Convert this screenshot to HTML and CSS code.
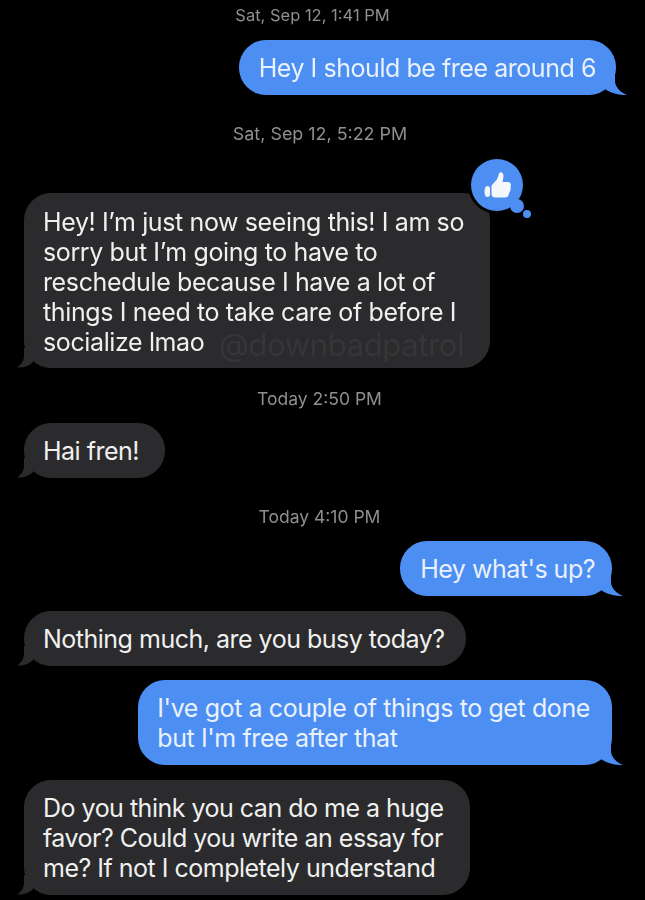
FILE: index.html
```html
<!DOCTYPE html>
<html lang="en">
<head>
<meta charset="utf-8">
<title>Messages</title>
<link rel="stylesheet" href="styles.css">
</head>
<body>
<main class="thread">
  <div class="time time-a">Sat, Sep 12, 1:41 PM</div>
  <div class="row out gap-s edge-far"><div class="bubble blue mid">Hey I should be free around 6<svg class="tail tail-out" viewBox="0 0 24 20"><path d="M0 0H12V6C12 12 18 18 24 20C15 20 8 18 2 14Z"/></svg></div></div>
  <div class="time time-b gap-m">Sat, Sep 12, 5:22 PM</div>
  <div class="row in gap-l"><div class="bubble gray wide">Hey! I’m just now seeing this! I am so<br>sorry but I’m going to have to<br>reschedule because I have a lot of<br>things I need to take care of before I<br>socialize lmao <span class="mark">@downbadpatrol</span><svg class="tail tail-in" viewBox="0 0 20 20"><path d="M20 0H7V8C7 13 4 17 0 19.500C6 20 12 18 16 14Z"/></svg>
    <svg class="reaction" viewBox="0 0 70 70" aria-label="Liked">
      <circle cx="32" cy="30" r="29" fill="#000"/><circle cx="52" cy="51" r="10" fill="#000"/>
      <circle cx="32" cy="30" r="26" fill="#4d8ef2"/><circle cx="52" cy="51" r="7" fill="#4d8ef2"/><circle cx="62" cy="59" r="4" fill="#4d8ef2"/>
      <path fill="#f4f7fc" d="M26.5 30.5L31.5 25C33 22.500 33.500 20.500 34 18.500C35 16.500 38.500 17 38.500 21C38.500 23 38 25 37.500 27L43 27C46 27 46.500 30 45.500 32C46 35 45 37 44 38C44 41 42 42.500 40 42.500L30 42.500C28 42.500 26.500 41 26.500 39Z"/>
      <path fill="#f4f7fc" d="M22.500 31C24 31 25 32 25 33.500V39.500C25 41 24 42 22.500 42C20.500 42 19.500 40 19.500 36.500C19.500 33 20.500 31 22.500 31Z"/>
    </svg></div></div>
  <div class="time time-c gap-t">Today 2:50 PM</div>
  <div class="row in gap-s"><div class="bubble gray roomy">Hai fren!<svg class="tail tail-in" viewBox="0 0 20 20"><path d="M20 0H7V8C7 13 4 17 0 19.500C6 20 12 18 16 14Z"/></svg></div></div>
  <div class="time time-c gap-m">Today 4:10 PM</div>
  <div class="row out gap-s"><div class="bubble blue snug">Hey what's up?<svg class="tail tail-out" viewBox="0 0 24 20"><path d="M0 0H12V6C12 12 18 18 24 20C15 20 8 18 2 14Z"/></svg></div></div>
  <div class="row in gap-s"><div class="bubble gray">Nothing much, are you busy today?<svg class="tail tail-in" viewBox="0 0 20 20"><path d="M20 0H7V8C7 13 4 17 0 19.500C6 20 12 18 16 14Z"/></svg></div></div>
  <div class="row out gap-xs"><div class="bubble blue loose">I've got a couple of things to get done<br>but I'm free after that<svg class="tail tail-out" viewBox="0 0 24 20"><path d="M0 0H12V6C12 12 18 18 24 20C15 20 8 18 2 14Z"/></svg></div></div>
  <div class="row in gap-s"><div class="bubble gray roomy">Do you think you can do me a huge<br>favor? Could you write an essay for<br>me? If not I completely understand<svg class="tail tail-in" viewBox="0 0 20 20"><path d="M20 0H7V8C7 13 4 17 0 19.500C6 20 12 18 16 14Z"/></svg></div></div>
</main>
</body>
</html>
```
FILE: styles.css
```css
* { box-sizing: border-box; }
html, body { margin: 0; height: 900px; overflow: hidden; background: #000; }
.thread {
  display: flex;
  flex-direction: column;
  height: 900px;
  padding-top: 5px;
  font-family: Inter, "Liberation Sans", sans-serif;
  filter: blur(0.45px);
}
.time {
  height: 20px;
  line-height: 21px;
  color: #8f8f91;
  text-align: center;
}
.time-a { padding-right: 20px; font-size: 16.5px; }
.time-b { padding-right: 5px; font-size: 17.9px; }
.time-c { padding-right: 6px; font-size: 17.5px; }
.row { display: flex; flex: none; }
.out { justify-content: flex-end; padding-right: 33px; }
.edge-far { padding-right: 29px; }
.in { justify-content: flex-start; padding-left: 24px; }
.gap-xs { margin-top: 14px; }
.gap-s { margin-top: 15px; }
.gap-t { margin-top: 20px; }
.gap-m { margin-top: 28px; }
.gap-l { margin-top: 50px; }
.bubble {
  position: relative;
  padding: 13px 20px 12px;
  border-radius: 27px;
  font-size: 25px;
  letter-spacing: -0.5px;
  line-height: 30px;
  white-space: nowrap;
}
.blue { background: #4d8ef2; color: #e9f1fd; }
.gray { background: #2b2b2d; color: #f0f0f0; padding-left: 19px; padding-right: 21px; }
.mid { letter-spacing: -0.45px; }
.loose { letter-spacing: -0.4px; padding-left: 19px; padding-right: 22px; }
.snug { padding-right: 17px; }
.roomy { padding-right: 26px; }
.wide { padding: 14px 26px 11px 19px; letter-spacing: -0.38px; }
.mark {
  color: #363638;
  font-size: 31px;
  line-height: 20px;
  margin-left: 8px;
  vertical-align: -5px;
}
.tail { position: absolute; bottom: 0; height: 20px; }
.tail-in { left: -7px; width: 20px; fill: #2b2b2d; }
.tail-out { right: -11px; width: 24px; fill: #4d8ef2; }
.reaction { position: absolute; top: -38px; right: -45px; width: 70px; height: 70px; }
```
